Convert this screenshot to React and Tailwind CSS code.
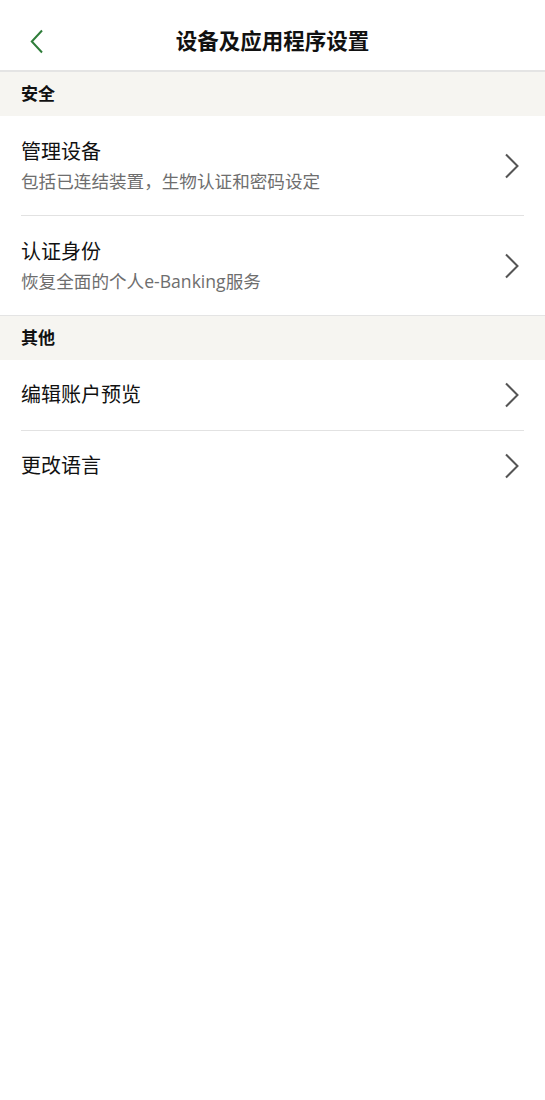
import React from "react";

const font = { fontFamily: '"Open Sans", "Noto Sans CJK SC", sans-serif' };

function Chevron() {
  return (
    <svg width="16" height="26" viewBox="0 0 16 26" className="shrink-0">
      <path d="M2 1.5 L13.5 13 L2 24.5" fill="none" stroke="#555" strokeWidth="2" />
    </svg>
  );
}

function Section({ title }) {
  return (
    <div className="h-[44px] bg-[#f6f5f1] flex items-center px-[21px]">
      <span className="text-[17px] font-bold text-[#111]">{title}</span>
    </div>
  );
}

function Row({ title, sub, h, divider }) {
  return (
    <div className="px-[21px] bg-white">
      <div className={`flex items-center justify-between pr-[4px] ${h} ${divider ? "border-b border-[#e2e2e2]" : ""}`}>
        <div className="flex flex-col">
          <span className="text-[20px] leading-[30px] text-[#111]">{title}</span>
          {sub && <span className="text-[17.6px] leading-[28px] text-[#6e6e6e]">{sub}</span>}
        </div>
        <Chevron />
      </div>
    </div>
  );
}

export default function App() {
  return (
    <div className="w-[545px] min-h-[1100px] bg-white" style={font}>
      <div className="h-[72px] border-b-2 border-[#e4e4e4] relative flex items-center justify-center pt-[12px]">
        <div className="absolute left-[30px] top-[29px]">
          <svg width="14" height="25" viewBox="0 0 14 25">
            <path d="M12 1.5 L1.8 12.5 L12 23.5" fill="none" stroke="#2f7d3a" strokeWidth="2" />
          </svg>
        </div>
        <span className="text-[21.5px] font-bold text-[#111]">设备及应用程序设置</span>
      </div>
      <Section title="安全" />
      <Row title="管理设备" sub="包括已连结装置，生物认证和密码设定" h="h-[100px]" divider />
      <Row title="认证身份" sub="恢复全面的个人e-Banking服务" h="h-[99px]" />
      <div className="border-t border-[#e4e4e4]">
        <Section title="其他" />
      </div>
      <Row title="编辑账户预览" h="h-[71px]" divider />
      <Row title="更改语言" h="h-[70px]" />
    </div>
  );
}
